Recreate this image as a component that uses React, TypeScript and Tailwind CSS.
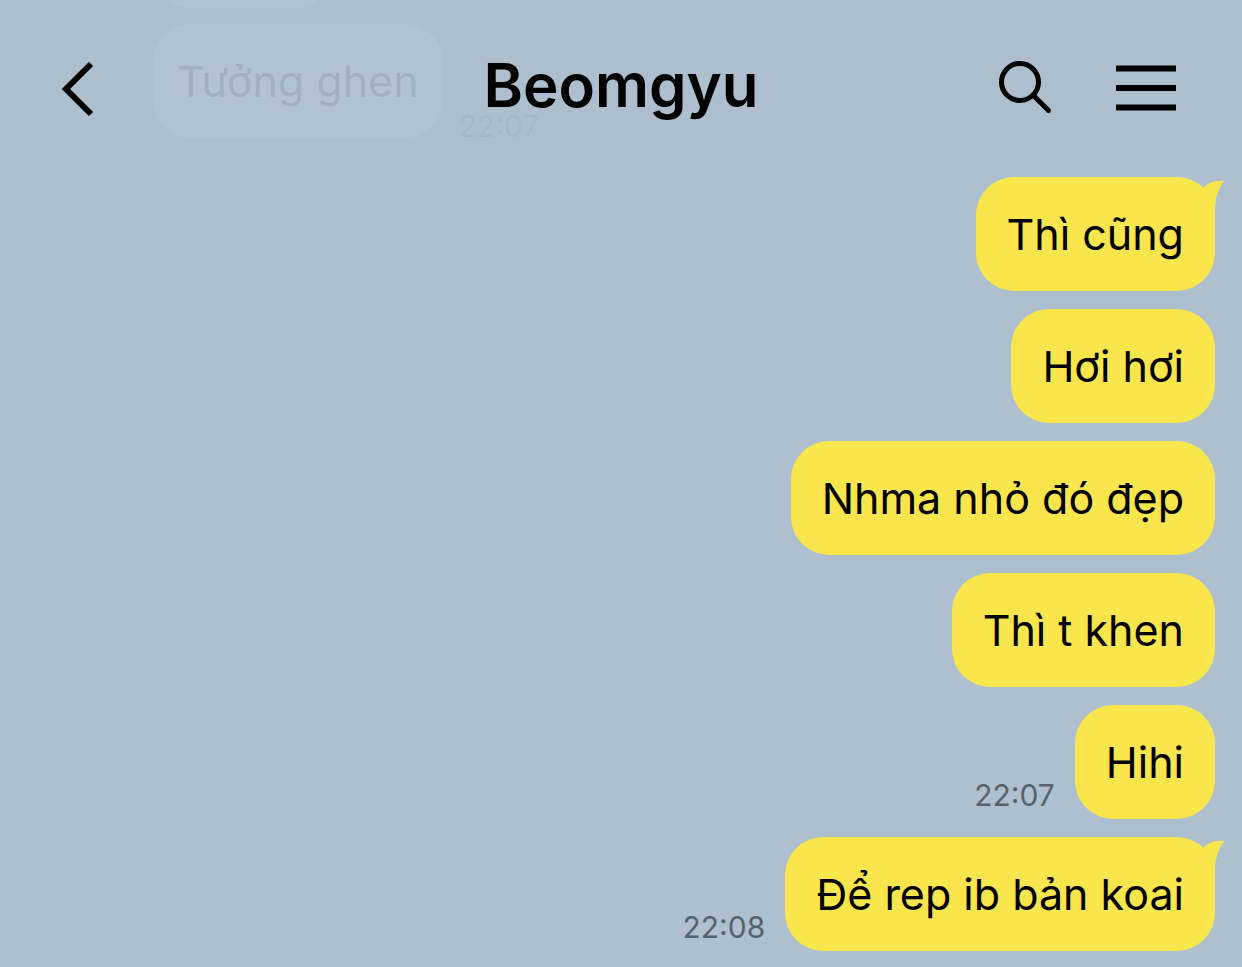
import React from 'react';

interface Message {
  id: number;
  text?: string;
  mine: boolean;
  time?: string;
  tail?: boolean;
}

const messages: Message[] = [
  { id: 1, mine: false },
  { id: 2, text: 'Tưởng ghen', mine: false, time: '22:07' },
  { id: 3, text: 'Thì cũng', mine: true, tail: true },
  { id: 4, text: 'Hơi hơi', mine: true },
  { id: 5, text: 'Nhma nhỏ đó đẹp', mine: true },
  { id: 6, text: 'Thì t khen', mine: true },
  { id: 7, text: 'Hihi', mine: true, time: '22:07' },
  { id: 8, text: 'Để rep ib bản koai', mine: true, time: '22:08', tail: true },
];

const BubbleTail: React.FC = () => (
  <svg
    className="absolute top-0 -right-[10px] w-[40px] h-[44px]"
    viewBox="0 0 40 44"
    fill="#f9e54c"
    aria-hidden="true"
  >
    <path d="M16 13 C22 6 29 3 39.500 3.800 C34 11 30 20 30 34 L30 40 L10 40 Z" />
  </svg>
);

const OutgoingRow: React.FC<{ message: Message }> = ({ message }) => (
  <li className="flex flex-row-reverse items-end gap-5">
    <div className="relative rounded-[38px] bg-[#f9e54c] px-[31px] py-6 text-[43px] leading-[66px] text-black">
      {message.tail && <BubbleTail />}
      <span className="relative">{message.text}</span>
    </div>
    {message.time && (
      <time className="pb-2 text-[30px] leading-[32px] text-[#56636d]">{message.time}</time>
    )}
  </li>
);

const IncomingRow: React.FC<{ message: Message }> = ({ message }) => (
  <li className="flex items-end gap-4 pl-[126px]">
    {message.text ? (
      <div className="rounded-[38px] bg-white px-6 py-6 text-[43px] leading-[66px] text-black">
        {message.text}
      </div>
    ) : (
      <div className="h-[114px] w-[180px] rounded-[38px] bg-[#e8ffe0]" />
    )}
    {message.time && (
      <time className="-mb-1 text-[30px] leading-[32px] text-[#56636d]">{message.time}</time>
    )}
  </li>
);

const App: React.FC = () => {
  const incoming = messages.filter(m => !m.mine);
  const outgoing = messages.filter(m => m.mine);

  return (
    <div className="relative h-screen overflow-hidden bg-[#aec0cf] font-['Inter','Liberation_Sans',sans-serif]">
      <main className="flex h-full flex-col justify-end gap-[39px] px-[27px] pb-4">
        <ul className="flex flex-col gap-4 shrink-0">
          {incoming.map(m => <IncomingRow key={m.id} message={m} />)}
        </ul>
        <ul className="flex flex-col gap-[18px] shrink-0">
          {outgoing.map(m => <OutgoingRow key={m.id} message={m} />)}
        </ul>
      </main>

      {/* Translucent bar, older messages slide under it */}
      <header className="absolute inset-x-0 top-0 grid grid-cols-[1fr_auto_1fr] items-center bg-[#adbdce]/93 px-[58px] pt-[55px] pb-[37px]">
        <button type="button" aria-label="Back" className="justify-self-start">
          <svg className="w-[40px] h-[60px]" viewBox="0 0 40 60" fill="none" stroke="#000" strokeWidth="6">
            <path d="M33 7 L8 32 L33 57" />
          </svg>
        </button>
        <h1 className="pb-1 text-[60px] leading-[60px] font-semibold text-black">Beomgyu</h1>
        <div className="flex items-center gap-[60px] justify-self-end pr-2">
          <button type="button" aria-label="Search">
            <svg className="w-[60px] h-[60px]" viewBox="0 0 60 60" fill="none" stroke="#000" strokeWidth="5">
              <circle cx="24" cy="25" r="18.500" />
              <path d="M37 38 L52.500 53.500" strokeLinecap="round" />
            </svg>
          </button>
          <button type="button" aria-label="Menu">
            <svg className="w-[60px] h-[60px]" viewBox="0 0 60 60" fill="none" stroke="#000" strokeWidth="6">
              <path d="M0 11.500 H60 M0 31 H60 M0 50.500 H60" />
            </svg>
          </button>
        </div>
      </header>
    </div>
  );
};

export default App;
